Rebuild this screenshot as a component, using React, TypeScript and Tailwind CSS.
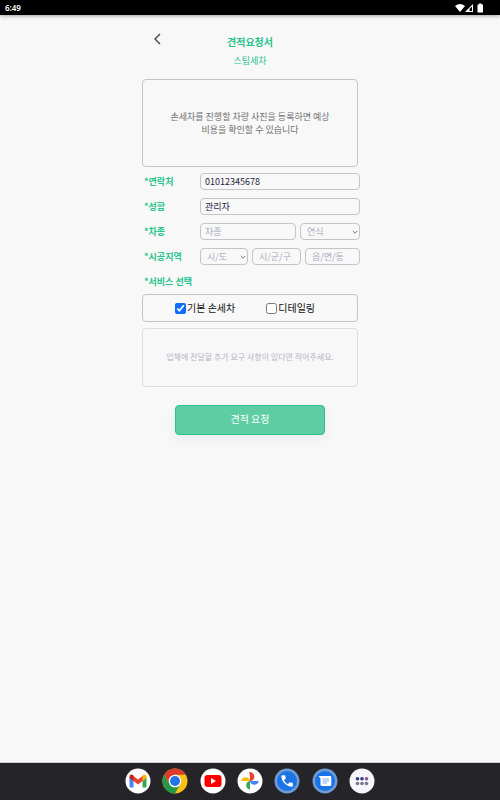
import React from "react";
import clsx from "clsx";

const fieldClass =
  "block h-[17px] w-full min-w-0 appearance-none rounded-[4px] border border-[#c4c4c4] bg-[#f8f8f8] px-1 text-[9px] leading-4 text-[#1f2340] outline-none placeholder:text-[#a9abc0] placeholder:opacity-100";

const Field = ({ id, label, children }: { id: string; label: string; children: React.ReactNode }) => (
  <div className="flex h-[17px] items-center">
    <label htmlFor={id} className="w-14 shrink-0 whitespace-nowrap text-[9px] leading-4 font-bold text-[#24c48a]">
      *{label}
    </label>
    <div className="flex min-w-0 flex-1 gap-1">{children}</div>
  </div>
);

const SelectBox = ({ id, label, className }: { id?: string; label: string; className: string }) => (
  <div className={clsx("relative shrink-0", className)}>
    <select id={id} aria-label={label} className={clsx(fieldClass, "pl-1.5 text-[#a9abc0]")}>
      <option>{label}</option>
    </select>
    <svg viewBox="0 0 6 6" fill="none" className="pointer-events-none absolute top-[6px] right-[2px] size-[6px]">
      <path d="M.8 2L3 4.2 5.2 2" stroke="#666" strokeWidth="0.9" />
    </svg>
  </div>
);

const StatusBar = () => (
  <header className="flex h-[15px] items-center justify-between bg-black pr-4 pl-[5px] shadow-[0_1px_4px_rgba(0,0,0,0.35)]">
    <span className="font-['Noto_Sans',sans-serif] text-[8px] leading-4 font-semibold text-white">6:49</span>
    <svg viewBox="0 0 29 10" className="h-[10px] w-[29px]" fill="#fff">
      <path d="M0 3Q5 -1 10 3L5 9Z" />
      <path d="M10 9L18 1V9Z" />
      <path d="M14.5 8V6L17 3.500V8Z" fill="#000" />
      <path d="M22.500 1.500H24V.5h2.500v1H28V9.500H22.500Z" />
    </svg>
  </header>
);

const dockApps = [
  {
    name: "Gmail",
    icon: (
      <>
        <circle cx="13" cy="13" r="12.5" fill="#fff" />
        <path d="M4.500 9v9.200c0 .7.5 1.300 1.300 1.300h2.700V11Z" fill="#4285f4" />
        <path d="M21.500 9v9.200c0 .7-.5 1.300-1.300 1.300h-2.700V11Z" fill="#34a853" />
        <path d="M7.500 7.300L13 11.500l5.500-4.200v5L13 16.500l-5.500-4.200Z" fill="#ea4335" />
        <path d="M4.500 8.800c0-2 2.100-2.900 3.500-1.700l.5.4v5.600l-4-3Z" fill="#c5221f" />
        <path d="M21.500 8.800c0-2-2.100-2.900-3.500-1.700l-.5.4v5.600l4-3Z" fill="#fbbc04" />
      </>
    ),
  },
  {
    name: "Chrome",
    icon: (
      <>
        <circle cx="13" cy="13" r="12.5" fill="#fbc116" />
        <path d="M2.2 6.7A12.5 12.5 0 0 1 23.8 6.7H13L7.6 16.1Z" fill="#dc3a2d" />
        <path d="M2.2 6.7L7.5 16.1a6.3 6.3 0 0 0 10.9 0L13 25.5A12.5 12.5 0 0 1 2.2 6.7Z" fill="#279847" />
        <circle cx="13" cy="13" r="6.3" fill="#fff" />
        <circle cx="13" cy="13" r="5" fill="#2374e8" />
      </>
    ),
  },
  {
    name: "YouTube",
    icon: (
      <>
        <circle cx="13" cy="13" r="12.5" fill="#fff" />
        <rect x="4.5" y="7" width="17" height="12" rx="3" fill="#f00" />
        <path d="M11 10v6l5-3Z" fill="#fff" />
      </>
    ),
  },
  {
    name: "Photos",
    icon: (
      <>
        <circle cx="13" cy="13" r="12.5" fill="#fff" />
        <path d="M13 4.300a4.400 4.400 0 0 1 0 8.700Z" fill="#ea4335" />
        <path d="M12 4.300h1a4.400 4.400 0 0 1 4.400 4.400c0 2.400-2 4.300-4.400 4.300V8Z" fill="#ea4335" />
        <path d="M21.700 13a4.400 4.400 0 0 1-8.700 0Z" fill="#4285f4" />
        <path d="M13 21.700A4.400 4.400 0 0 1 13 13Z" fill="#34a853" />
        <path d="M4.300 13a4.400 4.400 0 0 1 8.700 0Z" fill="#fbbc04" />
      </>
    ),
  },
  {
    name: "Phone",
    icon: (
      <>
        <circle cx="13" cy="13" r="12.5" fill="#709bd3" />
        <circle cx="13" cy="13" r="10" fill="#1b73e8" />
        <path
          d="M8.2 7.2h2.4c.4 0 .7.3.7.6l.4 2.2c0 .3 0 .5-.2.7l-1.6 1.5a9.7 9.7 0 0 0 4 4l1.5-1.6c.2-.2.4-.3.7-.2l2.2.4c.4.1.6.4.6.7v2.4c0 .5-.4.8-.8.8C12.3 18.7 7.500 13.900 7.400 8c0-.4.3-.8.8-.8Z"
          fill="#fff"
        />
      </>
    ),
  },
  {
    name: "Messages",
    icon: (
      <>
        <circle cx="13" cy="13" r="12.5" fill="#709bd3" />
        <circle cx="13" cy="13" r="10" fill="#1b73e8" />
        <path d="M6.5 8H18c.8 0 1.3.5 1.3 1.3v7.500c0 .7-.5 1.200-1.300 1.200H9.800c-.8 0-1.300-.5-1.300-1.200V10.500Z" fill="#fff" />
        <path d="M10.500 11H17M10.500 13H17M10.500 15H15" stroke="#5b9cf3" strokeWidth="0.8" />
      </>
    ),
  },
  {
    name: "All apps",
    icon: (
      <>
        <circle cx="13" cy="13" r="12.5" fill="#f7f4fb" />
        <g fill="#2c3a80">
          <circle cx="8.5" cy="10.7" r="1.8" />
          <circle cx="13" cy="10.7" r="1.8" />
          <circle cx="17.5" cy="10.7" r="1.8" fill="#8a5a86" />
        </g>
        <g fill="#77778a">
          <circle cx="8.5" cy="15.5" r="1.8" />
          <circle cx="13" cy="15.5" r="1.8" />
          <circle cx="17.5" cy="15.5" r="1.8" />
        </g>
      </>
    ),
  },
];

const Dock = () => (
  <nav className="flex h-[38px] justify-center border-t border-[#d0d0d0] bg-[#252529] pt-[5px]">
    <div className="flex w-[250px] justify-between">
      {dockApps.map((app) => (
        <button key={app.name} type="button" aria-label={app.name} className="size-[26px]">
          <svg viewBox="0 0 26 26" className="size-full">
            {app.icon}
          </svg>
        </button>
      ))}
    </div>
  </nav>
);

const CheckOption = ({ label, checked }: { label: string; checked?: boolean }) => (
  <label className="flex items-center gap-px text-[10px] leading-4 text-[#111]">
    <input type="checkbox" defaultChecked={checked} className="size-[11px] accent-[#0b6cff]" />
    {label}
  </label>
);

export default function App() {
  return (
    <div className="flex min-h-screen flex-col bg-[#f8f8f8] font-['Noto_Sans_CJK_KR',sans-serif]">
      <StatusBar />
      <main className="flex-1">
        <form className="mx-auto w-[216px] pt-4" onSubmit={(e) => e.preventDefault()}>
          <div className="grid grid-cols-[30px_1fr_30px]">
            <button type="button" aria-label="뒤로" className="flex h-4 items-center justify-center">
              <svg viewBox="0 0 8 12" fill="none" className="h-3 w-2">
                <path d="M7 1L2 6l5 5" stroke="#444" strokeWidth="1.4" />
              </svg>
            </button>
            <div className="pt-[3px] text-center text-[#24c48a]">
              <h1 className="text-[10px] leading-4 font-bold">견적요청서</h1>
              <p className="mt-[3px] text-[9px] leading-4">스팀세차</p>
            </div>
          </div>

          <div className="mt-[10px] flex h-[88px] items-center justify-center rounded-[4px] border border-[#c4c4c4] px-6">
            <p className="text-center text-[9px] leading-[13px] text-[#707070]">
              손세차를 진행할 차량 사진을 등록하면 예상
              <br />
              비용을 확인할 수 있습니다
            </p>
          </div>

          <div className="-mr-0.5 mt-1.5 flex flex-col gap-2 pl-0.5">
            <Field id="phone" label="연락처">
              <input id="phone" type="tel" defaultValue="01012345678" className={fieldClass} />
            </Field>
            <Field id="name" label="성함">
              <input id="name" defaultValue="관리자" className={fieldClass} />
            </Field>
            <Field id="car" label="차종">
              <input id="car" placeholder="차종" className={fieldClass} />
              <SelectBox label="연식" className="w-[60px]" />
            </Field>
            <Field id="city" label="시공지역">
              <SelectBox id="city" label="시/도" className="w-12" />
              <div className="w-[49px] shrink-0">
                <input aria-label="시/군/구" placeholder="시/군/구" className={clsx(fieldClass, "pl-1.5")} />
              </div>
              <input aria-label="읍/면/동" placeholder="읍/면/동" className={clsx(fieldClass, "pl-1.5")} />
            </Field>
            <p className="flex h-[17px] items-center text-[9px] leading-4 font-bold text-[#24c48a]">*서비스 선택</p>
          </div>

          <div className="mt-1 flex h-7 items-center gap-[31px] rounded-[4px] border border-[#c4c4c4] pl-8">
            <CheckOption label="기본 손세차" checked />
            <CheckOption label="디테일링" />
          </div>

          <textarea
            aria-label="추가 요구 사항"
            placeholder="업체에 전달할 추가 요구 사항이 있다면 적어주세요."
            className="mt-1.5 block h-[59px] w-full resize-none rounded-[4px] border border-[#dcdce4] pt-[22px] text-center text-[8px] leading-3 outline-none placeholder:text-[#b4b4c4] placeholder:opacity-100"
          />

          <button
            type="submit"
            className="mx-auto mt-[18px] block h-[30px] w-[150px] rounded-[4px] border border-[#24c48a] bg-[#5ecda3] pb-0.5 text-[10px] leading-4 text-white shadow-[0_4px_12px_rgba(160,170,220,0.15)]"
          >
            견적 요청
          </button>
        </form>
      </main>
      <Dock />
    </div>
  );
}
